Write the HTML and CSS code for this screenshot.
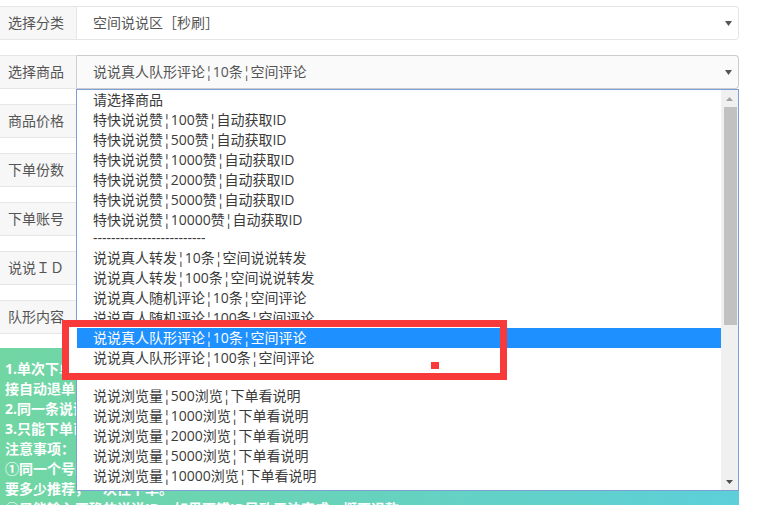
FILE: index.html
```html
<!DOCTYPE html>
<html lang="zh-CN">
<head>
<meta charset="utf-8">
<title>下单</title>
<link rel="stylesheet" href="styles.css">
</head>
<body>
<div class="page">
  <div class="form">
    <div class="fields">
      <div class="row">
        <span class="addon">选择分类</span>
        <div class="control">空间说说区［秒刷］<svg class="caret" viewBox="0 0 7 5"><polygon points="0,0 7,0 3.5,5"/></svg></div>
      </div>
      <div class="row">
        <span class="addon addon-active">选择商品</span>
        <div class="control control-active">说说真人队形评论¦10条¦空间评论<svg class="caret" viewBox="0 0 7 5"><polygon points="0,0 7,0 3.5,5"/></svg></div>
      </div>
      <div class="row">
        <span class="addon">商品价格</span>
        <div class="control"></div>
      </div>
      <div class="row">
        <span class="addon">下单份数</span>
        <div class="control"></div>
      </div>
      <div class="row">
        <span class="addon">下单账号</span>
        <div class="control"></div>
      </div>
      <div class="row">
        <span class="addon">说说ＩＤ</span>
        <div class="control"></div>
      </div>
      <div class="row">
        <span class="addon">队形内容</span>
        <div class="control"></div>
      </div>
    </div>
    <div class="notice">
      <p>1.单次下单数量不能低于10条，否则系统将直</p>
      <p>接自动退单，不予处理。</p>
      <p>2.同一条说说请勿重复下单，等待上一单完成后再下单。</p>
      <p>3.只能下单已公开的说说，加密说说无法完成。</p>
      <p>注意事项：</p>
      <p>①同一个号的同一条说说只能下单一次，所以</p>
      <p>要多少推荐，一次性下单。</p>
      <p>②只能输入正确的说说ID，如果下错ID导致无法完成，概不退款。</p>
    </div>
  </div>

  <div class="dropdown">
    <div class="options">
      <div class="opt">请选择商品</div>
      <div class="opt">特快说说赞¦100赞¦自动获取ID</div>
      <div class="opt">特快说说赞¦500赞¦自动获取ID</div>
      <div class="opt">特快说说赞¦1000赞¦自动获取ID</div>
      <div class="opt">特快说说赞¦2000赞¦自动获取ID</div>
      <div class="opt">特快说说赞¦5000赞¦自动获取ID</div>
      <div class="opt">特快说说赞¦10000赞¦自动获取ID</div>
      <div class="opt opt-gap">-------------------------</div>
      <div class="opt">说说真人转发¦10条¦空间说说转发</div>
      <div class="opt">说说真人转发¦100条¦空间说说转发</div>
      <div class="opt">说说真人随机评论¦10条¦空间评论</div>
      <div class="opt">说说真人随机评论¦100条¦空间评论</div>
      <div class="opt opt-sel">说说真人队形评论¦10条¦空间评论</div>
      <div class="opt">说说真人队形评论¦100条¦空间评论</div>
      <div class="opt opt-gap"></div>
      <div class="opt">说说浏览量¦500浏览¦下单看说明</div>
      <div class="opt">说说浏览量¦1000浏览¦下单看说明</div>
      <div class="opt">说说浏览量¦2000浏览¦下单看说明</div>
      <div class="opt">说说浏览量¦5000浏览¦下单看说明</div>
      <div class="opt">说说浏览量¦10000浏览¦下单看说明</div>
    </div>
    <div class="sb">
      <div class="sb-btn"><svg class="sb-arrow up" viewBox="0 0 7 4"><polygon points="0,4 7,4 3.5,0"/></svg></div>
      <div class="sb-thumb"></div>
      <div class="sb-fill"></div>
      <div class="sb-btn"><svg class="sb-arrow down" viewBox="0 0 7 4"><polygon points="0,0 7,0 3.5,4"/></svg></div>
    </div>
  </div>

  <div class="annot"><span class="dot"></span></div>
</div>
</body>
</html>
```

FILE: styles.css
```css
* { box-sizing: border-box; }

body {
  margin: 0;
  background: #fff;
  font-family: "Open Sans", "Noto Sans CJK SC", sans-serif;
  font-size: 14px;
  color: #555;
}

.page {
  position: relative;
  width: 759px;
  height: 505px;
  overflow: hidden;
}

.form {
  width: 739px;
  padding-top: 6px;
}

.fields {
  display: flex;
  flex-direction: column;
  gap: 15px;
}

.row {
  display: flex;
  height: 34px;
}

.addon {
  flex: none;
  width: 77px;
  padding-left: 8px;
  background: #f7f7f7;
  border: 1px solid #e6e6e6;
  border-left: 0;
  line-height: 32px;
  white-space: nowrap;
  color: #555;
}

.addon-active {
  border-right-color: #cfcfcf;
}

.control {
  flex: 1;
  position: relative;
  padding-left: 16px;
  background: #fff;
  border: 1px solid #e6e6e6;
  border-left: 0;
  border-radius: 0 4px 4px 0;
  line-height: 32px;
  white-space: nowrap;
  color: #555;
}

.control-active {
  background: #fafafa;
  border-color: #cccccc;
}

.caret {
  position: absolute;
  right: 6px;
  top: 14px;
  width: 7px;
  height: 5px;
  fill: #555;
}

.notice {
  margin-top: 14px;
  height: 200px;
  padding: 11px 5px;
  background: linear-gradient(90deg, #71d6a2, #5ccfd9);
  color: #fff;
  font-weight: bold;
  line-height: 20px;
}

.notice p {
  margin: 0;
  white-space: nowrap;
}

.dropdown {
  position: absolute;
  left: 76px;
  top: 89px;
  width: 663px;
  height: 402px;
  display: flex;
  background: #fff;
  border: 1px solid #7d9fd5;
}

.options {
  flex: 1;
  overflow: hidden;
  color: #3a3a3a;
}

.opt {
  height: 20px;
  padding-left: 16px;
  line-height: 20px;
  white-space: nowrap;
}

.opt-gap {
  height: 18px;
  line-height: 16px;
}

.opt-sel {
  background: #1e90ff;
  color: #fff;
}

.sb {
  flex: none;
  width: 17px;
  display: flex;
  flex-direction: column;
  align-items: center;
  background: #f0f0f0;
}

.sb-btn {
  height: 17px;
  width: 17px;
  display: flex;
  align-items: center;
  justify-content: center;
}

.sb-arrow {
  width: 7px;
  height: 4px;
}

.sb-arrow.up { fill: #a3a3a3; }
.sb-arrow.down { fill: #505050; }

.sb-thumb {
  width: 13px;
  height: 218px;
  margin-left: 1px;
  background: #c1c1c1;
}

.sb-fill { flex: 1; }

.annot {
  position: absolute;
  left: 62px;
  top: 320px;
  width: 445px;
  height: 60px;
  border: 7px solid #f93a3a;
}

.annot::before {
  content: "";
  position: absolute;
  left: 0;
  top: 0;
  bottom: 0;
  width: 8px;
  background: #fff;
}

.dot {
  position: absolute;
  left: 362px;
  top: 35px;
  width: 8px;
  height: 7px;
  background: #f93a3a;
}
```
